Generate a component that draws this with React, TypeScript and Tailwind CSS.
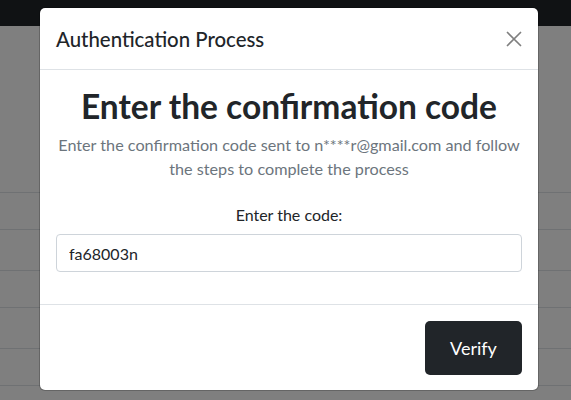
import React from 'react';

const font = { fontFamily: '"Lato", "Noto Sans", sans-serif' };

// rows of the table that sits behind the modal backdrop
const rowHeights = ['h-[37px]', 'h-[41px]', 'h-[37px]', 'h-[41px]', 'h-[37px]', 'h-[41px]'];

function CloseIcon() {
  return (
    <svg width="16" height="16" viewBox="0 0 16 16" className="block">
      <path d="M1.5 1.5 L14.5 14.5 M14.5 1.5 L1.5 14.5" stroke="#000" strokeOpacity="0.5" strokeWidth="1.7" strokeLinecap="round" fill="none" />
    </svg>
  );
}

export default function App() {
  return (
    <div className="relative h-[400px] w-full overflow-hidden bg-white" style={font}>
      {/* page underneath */}
      <div className="h-[26px] bg-[#212529]" />
      <div className="mt-[166px]">
        {rowHeights.map((h, i) => (
          <div key={i} className={`${h} border-t border-[#dee2e6]`} />
        ))}
      </div>

      {/* backdrop */}
      <div className="absolute inset-0 bg-black/50" />

      {/* modal */}
      <div className="absolute inset-0 flex items-start pl-[39px] pt-[7px]">
        <div className="w-[500px] rounded-[6px] border border-black/20 bg-white bg-clip-padding text-[#212529]">
          <div className="flex h-[62px] items-center justify-between border-b border-[#dee2e6] px-4">
            <h5 className="text-[20.4px] font-medium leading-6">Authentication Process</h5>
            <button className="-mr-1 flex h-6 w-6 items-center justify-center">
              <CloseIcon />
            </button>
          </div>

          <div className="px-4 pt-[17px] pb-4">
            <h1 className="mb-2 text-center text-[33.5px] font-bold leading-[38px]">Enter the confirmation code</h1>
            <p className="text-center text-[16.2px] leading-6 text-[#6c757d]">
              Enter the confirmation code sent to n****r@gmail.com and follow the steps to complete the process
            </p>
            <label className="mt-[22px] mb-[7px] block text-center text-[16px] leading-6">Enter the code:</label>
            <input
              className="mb-4 block h-[38px] w-full rounded-[4px] border border-[#ced4da] px-3 text-[16px] text-[#212529] outline-none"
              defaultValue="fa68003n"
              style={font}
            />
          </div>

          <div className="flex justify-end border-t border-[#dee2e6] px-4 pt-4 pb-[15px]">
            <button className="h-[54px] w-[97px] rounded-[5px] bg-[#212529] text-[18px] text-white">Verify</button>
          </div>
        </div>
      </div>
    </div>
  );
}
